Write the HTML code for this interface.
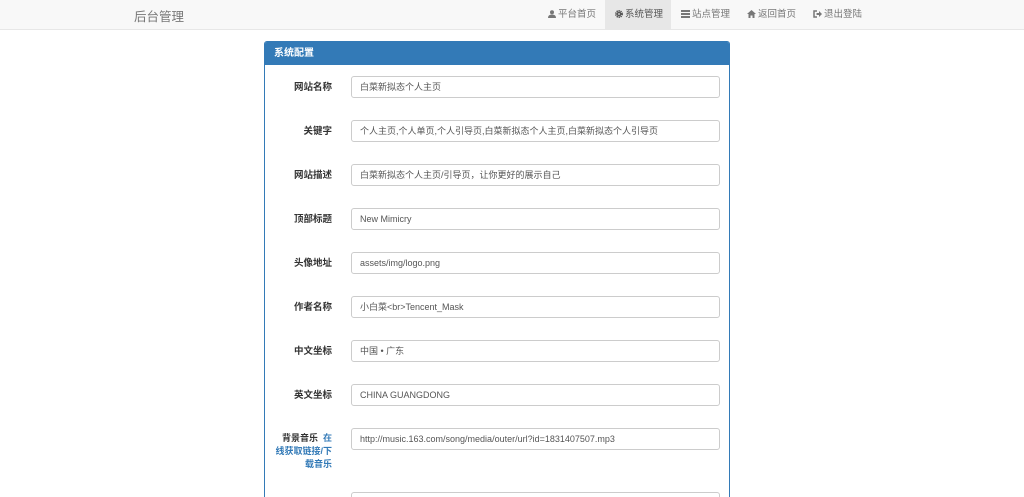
<!DOCTYPE html>
<html><head><meta charset="utf-8"><style>
*{box-sizing:border-box;margin:0;padding:0}
html,body{width:1024px;height:497px;overflow:hidden}
body{background:#fff;font-family:"Liberation Sans","Noto Sans CJK SC",sans-serif;position:relative}
.nav{position:absolute;left:0;top:0;width:1024px;height:30px;background:#f8f8f8;border-bottom:1px solid #e7e7e7}
.brand{position:absolute;left:134px;top:6px;font-size:12.5px;color:#777}
.item{position:absolute;top:0;height:29px;line-height:29px;font-size:9.5px;color:#777;padding:0 10px;white-space:nowrap}
.item.active{background:#e7e7e7;color:#555}
.item svg{vertical-align:-1px;margin-right:2px}
.panel{position:absolute;left:264px;top:41px;width:466px;height:456px;border:1px solid #337ab7;border-bottom:none;border-radius:3px 3px 0 0;background:#fff;overflow:hidden}
.ph{height:23px;background:#337ab7;color:#fff;font-size:10px;font-weight:bold;line-height:23px;padding-left:9px}
.lbl{position:absolute;right:397px;width:80px;text-align:right;font-size:9.5px;font-weight:bold;color:#333;line-height:13px;white-space:nowrap}
.lbl a{color:#337ab7;text-decoration:none}
.inp{position:absolute;left:86px;width:369px;height:22px;border:1px solid #ccc;border-radius:3px;font-size:9px;color:#555;line-height:20px;padding-left:8px;white-space:nowrap;overflow:hidden}
</style></head><body>
<div class="nav">
<div class="brand">后台管理</div>
<div class="item" style="left:538px"><svg width="8" height="8" viewBox="0 0 8 8"><circle cx="4" cy="2.2" r="2" fill="#777"/><path d="M0 8 Q0 4.5 4 4.5 Q8 4.5 8 8Z" fill="#777"/></svg>平台首页</div>
<div class="item active" style="left:605px;width:66px"><svg width="8" height="8" viewBox="0 0 8 8"><circle cx="4" cy="4" r="3" fill="none" stroke="#555" stroke-width="2" stroke-dasharray="1.2 0.7"/><circle cx="4" cy="4" r="2.2" fill="#555"/><circle cx="4" cy="4" r="0.9" fill="#e7e7e7"/></svg>系统管理</div>
<div class="item" style="left:671px"><svg width="9" height="8" viewBox="0 0 9 8"><rect x="0" y="0" width="9" height="2" fill="#777"/><rect x="0" y="3" width="9" height="2" fill="#777"/><rect x="0" y="6" width="9" height="2" fill="#777"/></svg>站点管理</div>
<div class="item" style="left:737px"><svg width="9" height="8" viewBox="0 0 9 8"><path d="M4.5 0 L9 4 L7.5 4 L7.5 8 L5.5 8 L5.5 5.5 L3.5 5.5 L3.5 8 L1.5 8 L1.5 4 L0 4Z" fill="#777"/></svg>返回首页</div>
<div class="item" style="left:803px"><svg width="9" height="8" viewBox="0 0 9 8"><path d="M4 1 L1 1 L1 7 L4 7" fill="none" stroke="#777" stroke-width="1.5"/><path d="M3.5 3 L6 3 L6 1 L9 4 L6 7 L6 5 L3.5 5Z" fill="#777"/></svg>退出登陆</div>
</div>
<div class="panel">
<div class="ph">系统配置</div>
<div class="lbl" style="top:39px">网站名称</div><div class="inp" style="top:34px">白菜新拟态个人主页</div>
<div class="lbl" style="top:83px">关键字</div><div class="inp" style="top:78px">个人主页,个人单页,个人引导页,白菜新拟态个人主页,白菜新拟态个人引导页</div>
<div class="lbl" style="top:127px">网站描述</div><div class="inp" style="top:122px">白菜新拟态个人主页/引导页，让你更好的展示自己</div>
<div class="lbl" style="top:171px">顶部标题</div><div class="inp" style="top:166px">New Mimicry</div>
<div class="lbl" style="top:215px">头像地址</div><div class="inp" style="top:210px">assets/img/logo.png</div>
<div class="lbl" style="top:259px">作者名称</div><div class="inp" style="top:254px">小白菜&lt;br&gt;Tencent_Mask</div>
<div class="lbl" style="top:303px">中文坐标</div><div class="inp" style="top:298px">中国 • 广东</div>
<div class="lbl" style="top:347px">英文坐标</div><div class="inp" style="top:342px">CHINA GUANGDONG</div>
<div class="lbl" style="top:390px;font-size:9px">背景音乐 &nbsp;<a>在</a><br><a>线获取链接/下</a><br><a>载音乐</a></div><div class="inp" style="top:386px">http://music.163.com/song/media/outer/url?id=1831407507.mp3</div>
<div class="inp" style="top:450px"></div>
</div>
</body></html>
